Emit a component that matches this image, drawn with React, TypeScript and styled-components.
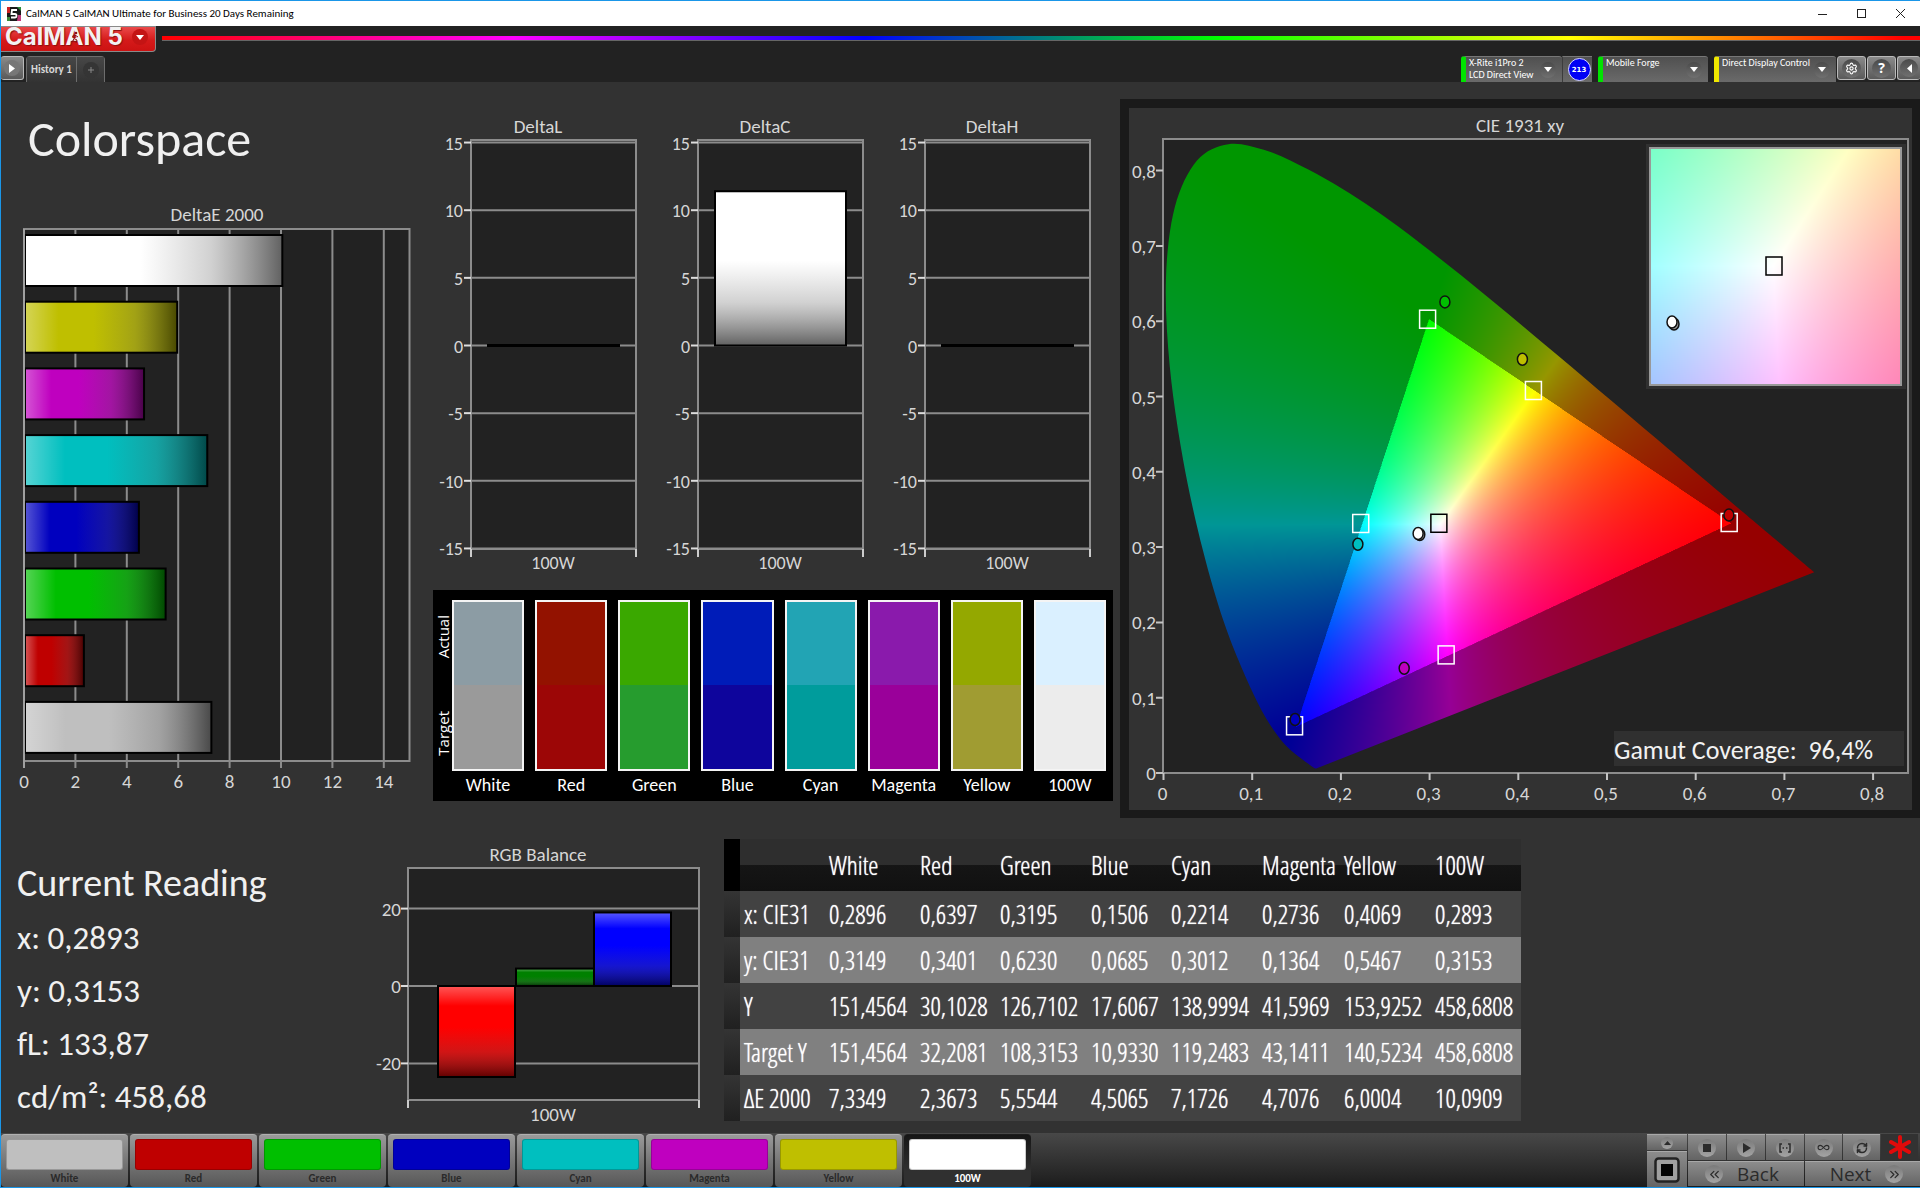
import React, { useLayoutEffect, useRef } from 'react';
import styled, { createGlobalStyle } from 'styled-components';
import { Settings, ChevronsLeft, ChevronsRight, Infinity as InfinityIcon, RefreshCw } from 'lucide-react';

const HUMANIST = 'Carlito, Calibri, Lato, sans-serif';
const CONDENSED = '"Open Sans Condensed Light", "Roboto Condensed", "Open Sans", sans-serif';
const PLAIN = '"Open Sans", "Noto Sans", sans-serif';
const TEXT = '#d6d6d6';
const PLOT = '#222222';
const LINE = '#8c8c8c';

const GlobalStyle = createGlobalStyle`
  *, *::before, *::after { box-sizing: border-box; }
  body { margin: 0; background: #323232; }
  button { font: inherit; color: inherit; border: 0; padding: 0; background: none; cursor: pointer; }
  h1, h2, p, dl, dd, dt, ul { margin: 0; padding: 0; }
`;

/* ---------- window frame ---------- */

const Window = styled.div`
  display: flex;
  flex-direction: column;
  min-height: 100vh;
  border: solid #1a96e8;
  border-width: 1px 0 1px 1px;
  background: #323232;
  color: #efefef;
  font-family: ${HUMANIST};
`;

const TitleBar = styled.header`
  display: flex;
  align-items: center;
  gap: 5px;
  height: 25px;
  padding-left: 6px;
  background: #fff;
  color: #000;
  font: 11px/24px ${HUMANIST};
`;

const WindowButtons = styled.div`
  display: flex;
  margin-left: auto;
`;

const WindowButton = styled.button`
  display: grid;
  place-items: center;
  width: 39px;
  height: 24px;
`;

const Header = styled.div`
  display: grid;
  grid-template-rows: 26px 30px;
  background: #222;
`;

const BrandRow = styled.div`
  display: flex;
  align-items: flex-start;
  gap: 6px;
`;

const Brand = styled.button`
  display: flex;
  align-items: center;
  justify-content: space-between;
  width: 155px;
  height: 26px;
  padding: 0 7px 4px 4px;
  border: solid #8a8a8a;
  border-width: 1px 1px 1px 0;
  border-radius: 0 0 4px 0;
  background: linear-gradient(#ea4a4a, #d51a1a 55%, #cc1212);
  color: #f2f2f2;
  font: 700 24px/20px Inter, "Liberation Sans", sans-serif;
  text-shadow: 1px 1px 1px #8b1010;
`;

const BrandName = styled.span`
  position: relative;
`;

/* The runner that stands on the crossbar of the "A". */
const Runner = styled.svg`
  position: absolute;
  left: 64px;
  top: 4px;
`;

const Spectrum = styled.div`
  flex: 1;
  height: 5px;
  margin-top: 10px;
  background: linear-gradient(90deg, #f00, #f0f 20%, #00f 40%, #0f0 60%, #ff0 80%, #f00 99%);
  border-bottom: 1px solid #666;
`;

const Round = styled.span<{ $size?: number; $tone?: string }>`
  display: grid;
  place-items: center;
  flex: none;
  width: ${p => p.$size ?? 16}px;
  height: ${p => p.$size ?? 16}px;
  border-radius: 50%;
  background: ${p => p.$tone ?? 'linear-gradient(#4a4a4a, #707070)'};
`;

const ToolRow = styled.div`
  display: flex;
  justify-content: space-between;
  align-items: flex-start;
  padding-top: 4px;
`;

const Group = styled.div`
  display: flex;
  align-items: flex-start;
  gap: 1px;
`;

const Square = styled.button<{ $w?: number; $open?: 'left' | 'right' }>`
  display: grid;
  place-items: center;
  width: ${p => p.$w ?? 29}px;
  height: 24px;
  border: 1px solid #b9b9b9;
  border-${p => p.$open ?? 'top'}-width: ${p => (p.$open ? 0 : 1)}px;
  border-radius: 3px;
  background: linear-gradient(#8a8a8a, #5a5a5a);
  color: #fff;
  font: 700 14px/16px ${PLAIN};
`;

const Tab = styled.button<{ $w: number }>`
  width: ${p => p.$w}px;
  height: 26px;
  display: grid;
  place-items: center;
  border: solid #6d6d6d;
  border-width: 1px 1px 0 0;
  background: linear-gradient(#474747, #333);
  font: 700 11px/24px ${HUMANIST};
  color: #d8d8d8;
`;

const Tabs = styled.div`
  display: flex;
  margin-left: 1px;
  border-left: 1px solid #6d6d6d;
  border-radius: 4px 4px 0 0;
  overflow: hidden;
`;

const Device = styled.button<{ $w: number; $mark: string }>`
  display: flex;
  justify-content: space-between;
  width: ${p => p.$w}px;
  height: 26px;
  padding-right: 6px;
  border-left: 5px solid ${p => p.$mark};
  border-top: 1px solid #777;
  border-radius: 3px 3px 0 0;
  background: linear-gradient(#505050, #6a6a6a);
  color: #fff;
  text-align: left;
  font: 10px/12px ${HUMANIST};
  white-space: pre;
`;

const DeviceLabel = styled.span`
  padding-left: 3px;
`;

const DeviceDrop = styled.span`
  display: flex;
  align-items: center;
`;

const DeviceGroup = styled.div`
  display: flex;
  margin-right: 5px;
`;

const Counter = styled.span`
  display: grid;
  place-items: center;
  width: 30px;
  height: 26px;
  padding-left: 3px;
  border-left: 1px solid #3c3c3c;
  border-top: 1px solid #777;
  background: linear-gradient(#505050, #6a6a6a);
`;

const CounterDot = styled.span`
  display: grid;
  place-items: center;
  width: 23px;
  height: 23px;
  border: 1px solid #dcdcff;
  border-radius: 50%;
  background: #0000f5;
  color: #fff;
  font: 700 7px/8px "DejaVu Sans", sans-serif;
`;

/* ---------- main area ---------- */

const Main = styled.main`
  flex: 1;
  display: flex;
  flex-direction: column;
`;

const TopRow = styled.section`
  display: grid;
  grid-template-columns: 429fr 690fr 800fr;
  align-items: start;
  padding-top: 17px;
`;

const Heading = styled.h1`
  padding: 0 0 0 27px;
  height: 101px;
  font: 50px/80px ${HUMANIST};
  color: #f0f0f0;
`;

const Drawing = styled.svg<{ $size?: number }>`
  display: block;
  width: 100%;
  height: auto;
  font: ${p => p.$size ?? 19}px ${HUMANIST};
`;

const Middle = styled.div`
  padding: 11px 9px 0 0;
`;

const Deltas = styled.div`
  display: grid;
  grid-template-columns: repeat(3, 1fr);
`;

const Comparison = styled.div`
  display: flex;
  margin: 10px -2px 0 3px;
  padding: 10px 7px 2px 0;
  background: #000;
`;

const SideLabels = styled.div`
  display: flex;
  flex-direction: column;
  justify-content: space-between;
  align-items: center;
  width: 19px;
  height: 171px;
  padding: 15px 0;
`;

const SideLabel = styled.span`
  writing-mode: vertical-rl;
  transform: rotate(180deg);
  font: 15px/18px ${PLAIN};
  color: #fff;
`;

const Pairs = styled.div`
  flex: 1;
  display: grid;
  grid-template-columns: repeat(8, 1fr);
  column-gap: 11px;
`;

const Pair = styled.div`
  font: 18px/28px ${HUMANIST};
  color: #fff;
  text-align: center;
`;

const PairColors = styled.div<{ $actual: string; $target: string }>`
  height: 171px;
  border: 2px solid #f4f4f4;
  background: linear-gradient(${p => p.$actual} 50%, ${p => p.$target} 50%);
`;

const CiePanel = styled.div`
  border: 9px solid #1a1a1a;
  border-width: 9px 8px 8px 9px;
`;

const GamutCanvas = styled.canvas`
  display: block;
  width: 100%;
  height: 100%;
`;

const BottomRow = styled.section`
  display: grid;
  grid-template-columns: 359fr 364fr 797fr 399fr;
  align-items: start;
`;

const Reading = styled.div`
  padding: 39px 0 0 16px;
  color: #f0f0f0;
`;

const ReadingTitle = styled.h2`
  font: 38px/52px ${HUMANIST};
  margin-bottom: 3px;
`;

const ReadingLine = styled.p`
  font: 33px/53px ${HUMANIST};
`;

const Results = styled.table`
  width: 100%;
  margin-top: 21px;
  border-collapse: collapse;
  table-layout: fixed;
  font: 300 26px/45px ${CONDENSED};
  color: #fff;
  text-shadow: 0 0 1px #fff;
  text-align: left;

  th, td { padding: 1px 0 0 4px; font-weight: inherit; white-space: nowrap; }
`;

const HeadRow = styled.tr`
  height: 52px;
  background: linear-gradient(#2e2e2e 49%, #151515 51%, #111);
`;

const DataRow = styled.tr<{ $light: boolean }>`
  height: 46px;
  background: ${p => (p.$light ? '#808080' : '#424242')};
`;

const Gutter = styled.td<{ $head?: boolean }>`
  background: ${p => (p.$head ? '#000' : 'linear-gradient(#343434, #202020)')};
`;

/* ---------- footer ---------- */

const Footer = styled.footer`
  display: flex;
  justify-content: space-between;
  height: 54px;
  padding-top: 1px;
  background: linear-gradient(#484848, #1c1c1c);
`;

const Patches = styled.div`
  display: flex;
  gap: 2px;
`;

const Patch = styled.button<{ $on: boolean }>`
  display: flex;
  flex-direction: column;
  width: 127px;
  padding: 4px 5px 0;
  border-top: 1px solid ${p => (p.$on ? '#1c1c1c' : '#b0b0b0')};
  border-radius: 4px;
  background: ${p => (p.$on ? 'linear-gradient(#161616, #303030 70%)' : 'linear-gradient(#9a9a9a, #777 50%, #575757)')};
  color: ${p => (p.$on ? '#fff' : '#2a2a2a')};
  font: 700 11px/17px ${HUMANIST};
  text-align: center;
`;

const PatchColor = styled.span<{ $color: string }>`
  display: block;
  width: 100%;
  height: 31px;
  border-radius: 3px;
  border: 1px solid rgba(0, 0, 0, 0.2);
  background: ${p => p.$color};
`;

const PatchName = styled.span`
  width: 100%;
`;

const Controls = styled.div`
  display: flex;
  gap: 1px;
  color: #2b2b2b;
`;

const Stack = styled.div`
  display: flex;
  flex-direction: column;
  gap: 1px;
`;

const Buttons = styled.div`
  display: flex;
  gap: 1px;
`;

const Control = styled.button<{ $w: number; $h: number; $pad?: string }>`
  display: flex;
  align-items: center;
  justify-content: center;
  gap: 14px;
  width: ${p => p.$w}px;
  height: ${p => p.$h}px;
  padding: ${p => p.$pad ?? '0'};
  border-top: 1px solid #a8a8a8;
  background: linear-gradient(#8c8c8c, #646464);
  font: 500 19px/22px ${PLAIN};
`;

const Busy = styled.span`
  display: grid;
  place-items: center;
  width: 37px;
  background: #323232;
`;

/* ---------- chart helpers ---------- */

const DownArrow = () => <svg width="8" height="5" viewBox="0 0 8 5"><path d="M0 0h8L4 5z" fill="#fff" /></svg>;

const Shade = ({ id, vertical }: { id: string; vertical?: boolean }) => (
  <linearGradient id={id} x1="0" y1="0" x2={vertical ? 0 : 1} y2={vertical ? 1 : 0}>
    <stop offset="0" stopColor="#fff" stopOpacity="0.34" />
    <stop offset="0.22" stopColor="#fff" stopOpacity="0" />
    <stop offset="0.45" stopColor="#606060" stopOpacity="0" />
    <stop offset="0.72" stopColor="#505050" stopOpacity="0.26" />
    <stop offset="1" stopColor="#000" stopOpacity="0.62" />
  </linearGradient>
);

interface BarProps { x: number; y: number; w: number; h: number; color: string; shade: string }
const Bar = ({ x, y, w, h, color, shade }: BarProps) => (
  <g>
    <rect x={x} y={y} width={w} height={h} fill={color} />
    <rect x={x} y={y} width={w} height={h} fill={`url(#${shade})`} stroke="#000" strokeWidth="2" />
  </g>
);

const deltaE = [
  { value: 10.09, color: '#ffffff' },
  { value: 6.0, color: '#bfbf00' },
  { value: 4.71, color: '#bf00bf' },
  { value: 7.17, color: '#00bfbf' },
  { value: 4.51, color: '#0000bf' },
  { value: 5.55, color: '#00bf00' },
  { value: 2.37, color: '#bf0000' },
  { value: 7.33, color: '#bfbfbf' },
];

const DeltaEChart = () => {
  const x = (v: number) => 23 + v * 25.7;
  return (
    <Drawing viewBox="0 0 429 600" role="img" aria-label="DeltaE 2000">
      <defs><Shade id="across" /></defs>
      <text x="216" y="21" fill={TEXT} textAnchor="middle">DeltaE 2000</text>
      <rect x={x(0)} y="29" width={x(15) - x(0)} height="532" fill={PLOT} stroke={LINE} strokeWidth="2" />
      {[0, 2, 4, 6, 8, 10, 12, 14].map(v => (
        <g key={v}>
          <path d={`M${x(v)} 29V568`} stroke={LINE} strokeWidth="2" />
          <text x={x(v)} y="588" fill={TEXT} textAnchor="middle">{v}</text>
        </g>
      ))}
      {deltaE.map((d, i) => (
        <Bar key={d.color} x={x(0) + 1} y={35 + i * 66.7} w={x(d.value) - x(0) - 2} h={51} color={d.color} shade="across" />
      ))}
      <path d={`M${x(0)} 29V568`} stroke="#a0a0a0" strokeWidth="2" />
    </Drawing>
  );
};

const DeltaChart = ({ name, value }: { name: string; value: number }) => {
  const y = (v: number) => 235.5 - v * 13.53;
  return (
    <Drawing $size={18} viewBox="0 0 227 470" role="img" aria-label={name}>
      <defs><Shade id={`down-${name}`} vertical /></defs>
      <text x="108" y="23" fill={TEXT} textAnchor="middle" fontSize="19">{name}</text>
      <rect x="41" y="30" width="165" height="409" fill={PLOT} stroke={LINE} strokeWidth="2" />
      {[15, 10, 5, 0, -5, -10, -15].map(v => (
        <g key={v}>
          <path d={`M41 ${y(v)}H206`} stroke={LINE} strokeWidth="2" />
          <path d={`M34 ${y(v)}H41`} stroke="#ddd" strokeWidth="2" />
          <text x="33" y={y(v) + 7} fill={TEXT} textAnchor="end">{v}</text>
        </g>
      ))}
      <path d="M41 439V447M206 439V447" stroke="#ccc" strokeWidth="2" />
      {value > 0
        ? <Bar x={58} y={y(value)} w={131} h={y(0) - y(value)} color="#fff" shade={`down-${name}`} />
        : <path d={`M57 ${y(0)}H190`} stroke="#000" strokeWidth="3" />}
      <text x="123" y="459" fill={TEXT} textAnchor="middle">100W</text>
    </Drawing>
  );
};

const BalanceChart = () => {
  const y = (v: number) => 168 - v * 3.87;
  return (
    <Drawing viewBox="0 0 364 315" role="img" aria-label="RGB Balance">
      <defs><Shade id="balance" vertical /></defs>
      <text x="178" y="43" fill={TEXT} textAnchor="middle">RGB Balance</text>
      <rect x="48" y="50" width="291" height="232" fill={PLOT} stroke={LINE} strokeWidth="2" />
      {[20, 0, -20].map(v => (
        <g key={v}>
          <path d={`M48 ${y(v)}H339`} stroke={LINE} strokeWidth="2" />
          <path d={`M41 ${y(v)}H48`} stroke="#ddd" strokeWidth="2" />
          <text x="41" y={y(v) + 7} fill={TEXT} textAnchor="end">{v}</text>
        </g>
      ))}
      <path d="M48 282V290M339 282V290" stroke="#ccc" strokeWidth="2" />
      <Bar x={78} y={y(0)} w={77} h={91} color="#ff0000" shade="balance" />
      <Bar x={156} y={y(4.5)} w={78} h={y(0) - y(4.5)} color="#008000" shade="balance" />
      <Bar x={234} y={y(19)} w={77} h={y(0) - y(19)} color="#0000ff" shade="balance" />
      <text x="193" y="303" fill={TEXT} textAnchor="middle">100W</text>
    </Drawing>
  );
};

/* ---------- chromaticity diagram ---------- */

const locus: [number, number][] = [
  [0.1733, 0.0048], [0.1714, 0.0051], [0.1689, 0.0069],
  [0.1644, 0.0109], [0.1566, 0.0177], [0.144, 0.0297], [0.1355, 0.0399], [0.1241, 0.0578], [0.1096, 0.0868],
  [0.0913, 0.1327], [0.0687, 0.2007], [0.0454, 0.295], [0.0235, 0.4127], [0.0082, 0.5384], [0.0039, 0.6548],
  [0.0139, 0.7502], [0.0389, 0.812], [0.0743, 0.8338], [0.1142, 0.8262], [0.1547, 0.8059], [0.1929, 0.7816],
  [0.2296, 0.7543], [0.2658, 0.7243], [0.3016, 0.6923], [0.3373, 0.6589], [0.3731, 0.6245], [0.4087, 0.5896],
  [0.4441, 0.5547], [0.4788, 0.5202], [0.5125, 0.4866], [0.5448, 0.4544], [0.5752, 0.4242], [0.6029, 0.3965],
  [0.627, 0.3725], [0.6482, 0.3514], [0.6658, 0.334], [0.6915, 0.3083], [0.714, 0.2859], [0.73, 0.27], [0.7347, 0.2653],
];

/* Smooth curve through the given points (Catmull-Rom turned into cubic Béziers). */
function smoothPath(points: [number, number][]): string {
  const at = (i: number) => points[Math.min(Math.max(i, 0), points.length - 1)];
  const parts = [`M${at(0)[0]} ${at(0)[1]}`];
  for (let i = 0; i < points.length - 1; i++) {
    const [a, b, c, d] = [at(i - 1), at(i), at(i + 1), at(i + 2)];
    parts.push(`C${b[0] + (c[0] - a[0]) / 6} ${b[1] + (c[1] - a[1]) / 6} ${c[0] - (d[0] - b[0]) / 6} ${c[1] - (d[1] - b[1]) / 6} ${c[0]} ${c[1]}`);
  }
  return `${parts.join('')}Z`;
}

function chromaticity(x: number, y: number): [number, number, number] {
  const yy = Math.max(y, 0.0001);
  const X = x / yy;
  const Z = (1 - x - yy) / yy;
  const raw = [
    3.2406 * X - 1.5372 - 0.4986 * Z,
    -0.9689 * X + 1.8758 + 0.0415 * Z,
    0.0557 * X - 0.204 + 1.057 * Z,
  ];
  const level = Math.min(...raw) < -0.002 ? 150 : 255;
  const top = Math.max(...raw);
  return raw.map(c => (Math.max(c, 0) / top) * level) as [number, number, number];
}

interface FieldProps { x0: number; x1: number; y0: number; y1: number; w: number; h: number }
const Field = ({ x0, x1, y0, y1, w, h }: FieldProps) => {
  const ref = useRef<HTMLCanvasElement>(null);
  useLayoutEffect(() => {
    const ctx = ref.current?.getContext('2d');
    if (!ctx) return;
    const image = ctx.createImageData(w, h);
    for (let j = 0; j < h; j++) {
      for (let i = 0; i < w; i++) {
        const [r, g, b] = chromaticity(x0 + ((i + 0.5) / w) * (x1 - x0), y1 - ((j + 0.5) / h) * (y1 - y0));
        image.data.set([r, g, b, 255], (j * w + i) * 4);
      }
    }
    ctx.putImageData(image, 0, 0);
  }, [x0, x1, y0, y1, w, h]);
  return <GamutCanvas ref={ref} width={w} height={h} />;
};

const targets: [number, number, string][] = [
  [0.3, 0.6, '#fff'], [0.4193, 0.5053, '#fff'], [0.64, 0.33, '#fff'], [0.2246, 0.3287, '#fff'],
  [0.3209, 0.1542, '#fff'], [0.15, 0.06, '#fff'], [0.3127, 0.329, '#000'],
];
const measured: [number, number, string][] = [
  [0.3195, 0.623, '#00bf00'], [0.4069, 0.5467, '#bfbf00'], [0.6397, 0.3401, '#bf0000'], [0.2214, 0.3012, '#00bfbf'],
  [0.2736, 0.1364, '#bf00bf'], [0.1506, 0.0685, '#0000bf'], [0.2912, 0.314, '#9a9a9a'], [0.2893, 0.3153, '#ffffff'],
];

const Target = ({ x, y, color }: { x: number; y: number; color: string }) => (
  <rect x={x - 8} y={y - 9} width="16" height="18" fill="none" stroke={color} strokeWidth="1.5" />
);
const Dot = ({ x, y, color }: { x: number; y: number; color: string }) => (
  <ellipse cx={x} cy={y} rx="5" ry="6" fill={color} stroke="#111" strokeWidth="1.5" />
);

const CieChart = () => {
  const x = (v: number) => 33.5 + v * 887;
  const y = (v: number) => 664 - v * 753;
  return (
    <Drawing viewBox="0 0 783 702" role="img" aria-label="CIE 1931 xy">
      <defs>
        <clipPath id="locus"><path d={smoothPath(locus.map(([a, b]) => [x(a), y(b)]))} /></clipPath>
      </defs>
      <text x="391" y="24" fill={TEXT} textAnchor="middle">CIE 1931 xy</text>
      <rect x="34" y="31" width="745" height="634" fill={PLOT} stroke={LINE} strokeWidth="2" />
      {[0, 0.1, 0.2, 0.3, 0.4, 0.5, 0.6, 0.7, 0.8].map(v => (
        <g key={v}>
          <path d={`M27 ${y(v) + 1}H34M${x(v) + 1} 665V672`} stroke="#c4c4c4" strokeWidth="2" />
          <text x="27" y={y(v) + 8} fill={TEXT} textAnchor="end">{String(v).replace('.', ',')}</text>
          <text x={x(v)} y="692" fill={TEXT} textAnchor="middle">{String(v).replace('.', ',')}</text>
        </g>
      ))}
      <g clipPath="url(#locus)">
        <foreignObject x={x(0)} y={y(0.84)} width={x(0.84) - x(0)} height={y(0) - y(0.84)}>
          <Field x0={0} x1={0.84} y0={0} y1={0.84} w={1490} h={1265} />
        </foreignObject>
      </g>
      {targets.map(([a, b, c]) => <Target key={a} x={x(a) - 1} y={y(b) - 1} color={c} />)}
      {measured.map(([a, b, c]) => <Dot key={a} x={x(a) - 1} y={y(b) - 1} color={c} />)}

      <rect x="517" y="36" width="260" height="245" fill="#303030" />
      <foreignObject x="521" y="40" width="251" height="237">
        <Field x0={0.2848} x1={0.3416} y0={0.3} y1={0.3577} w={251} h={237} />
      </foreignObject>
      <rect x="521" y="40" width="251" height="237" fill="none" stroke="#999" strokeWidth="2" />
      <Target x={645} y={158} color="#000" />
      <Dot x={545} y={216} color="#999" />
      <Dot x={543} y={214} color="#fff" />

      <rect x="485" y="623" width="290" height="35" fill="#303030" />
      <text x="485" y="651" fill="#f2f2f2" fontSize="26">{'Gamut Coverage:\u00a0 96,4%'}</text>
    </Drawing>
  );
};

/* ---------- data ---------- */

const pairs = [
  ['White', '#8c9ca4', '#9a9a9a'], ['Red', '#931200', '#9c0606'], ['Green', '#3aa800', '#269c2e'],
  ['Blue', '#001cb8', '#0e059c'], ['Cyan', '#22a4b4', '#009c9c'], ['Magenta', '#8a1aac', '#9a009a'],
  ['Yellow', '#94a800', '#a09c32'], ['100W', '#daf0ff', '#ececec'],
];

const columns = ['White', 'Red', 'Green', 'Blue', 'Cyan', 'Magenta', 'Yellow', '100W'];
const columnWidths = [16, 85, 91, 80, 91, 80, 91, 82, 91, 90];
const rows: [string, string[]][] = [
  ['x: CIE31', ['0,2896', '0,6397', '0,3195', '0,1506', '0,2214', '0,2736', '0,4069', '0,2893']],
  ['y: CIE31', ['0,3149', '0,3401', '0,6230', '0,0685', '0,3012', '0,1364', '0,5467', '0,3153']],
  ['Y', ['151,4564', '30,1028', '126,7102', '17,6067', '138,9994', '41,5969', '153,9252', '458,6808']],
  ['Target Y', ['151,4564', '32,2081', '108,3153', '10,9330', '119,2483', '43,1411', '140,5234', '458,6808']],
  ['ΔE 2000', ['7,3349', '2,3673', '5,5544', '4,5065', '7,1726', '4,7076', '6,0004', '10,0909']],
];

const patches = [
  ['White', '#bfbfbf'], ['Red', '#bf0000'], ['Green', '#00bf00'], ['Blue', '#0000bf'],
  ['Cyan', '#00bfbf'], ['Magenta', '#bf00bf'], ['Yellow', '#bfbf00'], ['100W', '#ffffff'],
];

const KNOB = 'linear-gradient(#7a7a7a, #a4a4a4)';

export default function App() {
  return (
    <Window>
      <GlobalStyle />
      <TitleBar>
        <svg width="14" height="14" viewBox="0 0 14 14" aria-hidden="true">
          <rect width="14" height="14" fill="#1a1a1a" />
          <path d="M0 0h3v6H0z" fill="#c22" /><path d="M10 0h4v4z" fill="#2a8a3a" /><path d="M11 8h3v6h-4z" fill="#c33a7a" /><path d="M0 10h3v4H0z" fill="#3a8a3a" />
          <path d="M10 3H5L4.500 7H8Q9.500 7 9.500 8.700T8 10.500H4" fill="none" stroke="#fff" strokeWidth="1.800" />
        </svg>
        <span>CalMAN 5 CalMAN Ultimate for Business 20 Days Remaining</span>
        <WindowButtons>
          <WindowButton aria-label="Minimize"><svg width="9" height="9"><path d="M0 5.500h9" stroke="#222" /></svg></WindowButton>
          <WindowButton aria-label="Maximize"><svg width="9" height="9"><rect x="0.500" y="0.500" width="8" height="8" fill="none" stroke="#222" /></svg></WindowButton>
          <WindowButton aria-label="Close"><svg width="9" height="9"><path d="M0 0l9 9M9 0L0 9" stroke="#222" /></svg></WindowButton>
        </WindowButtons>
      </TitleBar>

      <Header>
        <BrandRow>
          <Brand>
            <BrandName>
              CalMAN 5
              <Runner width="12" height="13" viewBox="0 0 12 13" aria-hidden="true">
                <circle cx="7" cy="2" r="1.300" fill="#8b1010" />
                <path d="M6.500 4L5 7.500L8 9L7 12M5 7.500L4 10L1.500 11M3 5.500L6 4L9 6" fill="none" stroke="#8b1010" strokeWidth="1" />
              </Runner>
            </BrandName>
            <Round $tone="#c41414"><DownArrow /></Round>
          </Brand>
          <Spectrum />
        </BrandRow>
        <ToolRow>
          <Group>
            <Square $w={23} $open="left" aria-label="Show panel">
              <Round $tone="#777"><svg width="6" height="9"><path d="M0 0l6 4.500L0 9z" fill="#fff" /></svg></Round>
            </Square>
            <Tabs>
              <Tab $w={50}>History 1</Tab>
              <Tab $w={28} aria-label="Add tab">
                <Round $tone="#353535"><svg width="6" height="6"><path d="M3 0v6M0 3h6" stroke="#888" /></svg></Round>
              </Tab>
            </Tabs>
          </Group>
          <Group>
            <DeviceGroup>
              <Device $w={101} $mark="#00e400">
                <DeviceLabel>{'X-Rite i1Pro 2\nLCD Direct View'}</DeviceLabel>
                <DeviceDrop><Round><DownArrow /></Round></DeviceDrop>
              </Device>
              <Counter><CounterDot>213</CounterDot></Counter>
            </DeviceGroup>
            <DeviceGroup>
              <Device $w={110} $mark="#00e400">
                <DeviceLabel>Mobile Forge</DeviceLabel>
                <DeviceDrop><Round><DownArrow /></Round></DeviceDrop>
              </Device>
            </DeviceGroup>
            <Device $w={122} $mark="#f0e800">
              <DeviceLabel>Direct Display Control</DeviceLabel>
              <DeviceDrop><Round><DownArrow /></Round></DeviceDrop>
            </Device>
            <Square aria-label="Settings"><Round $size={19}><Settings size={13} /></Round></Square>
            <Square aria-label="Help"><Round $size={19}>?</Round></Square>
            <Square $w={23} $open="right" aria-label="Hide panel">
              <Round $size={18}><svg width="5" height="9"><path d="M5 0L0 4.500L5 9z" fill="#fff" /></svg></Round>
            </Square>
          </Group>
        </ToolRow>
      </Header>

      <Main>
        <TopRow>
          <div>
            <Heading>Colorspace</Heading>
            <DeltaEChart />
          </div>
          <Middle>
            <Deltas>
              <DeltaChart name="DeltaL" value={0} />
              <DeltaChart name="DeltaC" value={11.4} />
              <DeltaChart name="DeltaH" value={0} />
            </Deltas>
            <Comparison>
              <SideLabels>
                <SideLabel>Actual</SideLabel>
                <SideLabel>Target</SideLabel>
              </SideLabels>
              <Pairs>
                {pairs.map(([name, actual, target]) => (
                  <Pair key={name}>
                    <PairColors $actual={actual} $target={target} />
                    {name}
                  </Pair>
                ))}
              </Pairs>
            </Comparison>
          </Middle>
          <CiePanel><CieChart /></CiePanel>
        </TopRow>

        <BottomRow>
          <Reading>
            <ReadingTitle>Current Reading</ReadingTitle>
            <ReadingLine>x: 0,2893</ReadingLine>
            <ReadingLine>y: 0,3153</ReadingLine>
            <ReadingLine>fL: 133,87</ReadingLine>
            <ReadingLine>cd/m²: 458,68</ReadingLine>
          </Reading>
          <BalanceChart />
          <Results>
            <colgroup>{columnWidths.map((w, i) => <col key={i} width={w} />)}</colgroup>
            <thead>
              <HeadRow>
                <Gutter $head /><td />
                {columns.map(c => <th key={c} scope="col">{c}</th>)}
              </HeadRow>
            </thead>
            <tbody>
              {rows.map(([name, values], r) => (
                <DataRow key={name} $light={r % 2 === 1}>
                  <Gutter />
                  <th scope="row">{name}</th>
                  {values.map((v, i) => <td key={i}>{v}</td>)}
                </DataRow>
              ))}
            </tbody>
          </Results>
        </BottomRow>
      </Main>

      <Footer>
        <Patches>
          {patches.map(([name, color]) => (
            <Patch key={name} $on={name === '100W'}>
              <PatchColor $color={color} />
              <PatchName>{name}</PatchName>
            </Patch>
          ))}
        </Patches>
        <Controls>
          <Stack>
            <Control $w={40} $h={16} aria-label="Expand">
              <Round $size={12} $tone={KNOB}><svg width="7" height="4"><path d="M0 4h7L3.500 0z" fill="#2b2b2b" /></svg></Round>
            </Control>
            <Control $w={40} $h={36} aria-label="Stop">
              <svg width="26" height="26"><rect x="1.500" y="1.500" width="23" height="23" rx="3" fill="#a0a0a0" stroke="#222" strokeWidth="2.500" /><rect x="7" y="7" width="12" height="12" fill="#050505" /></svg>
            </Control>
          </Stack>
          <Stack>
            <Buttons>
              <Control $w={38} $h={26} aria-label="Stop reading"><Round $size={18} $tone={KNOB}><svg width="8" height="8"><rect width="8" height="8" fill="#2b2b2b" /></svg></Round></Control>
              <Control $w={38} $h={26} aria-label="Read"><Round $size={18} $tone={KNOB}><svg width="9" height="10"><path d="M1 0l8 5l-8 5z" fill="#2b2b2b" /></svg></Round></Control>
              <Control $w={38} $h={26} aria-label="Read series">
                <Round $size={18} $tone={KNOB}><svg width="12" height="10"><path d="M3 1H1v8h2M9 1h2v8H9" fill="none" stroke="#2b2b2b" strokeWidth="1.500" /><path d="M3.500 5h1.500M7 5h1.500" stroke="#2b2b2b" strokeWidth="1.500" /></svg></Round>
              </Control>
              <Control $w={37} $h={26} aria-label="Continuous"><Round $size={18} $tone={KNOB}><InfinityIcon size={13} /></Round></Control>
              <Control $w={37} $h={26} aria-label="Refresh"><Round $size={18} $tone={KNOB}><RefreshCw size={12} strokeWidth={3} /></Round></Control>
              <Busy>
                <svg width="22" height="24" viewBox="-11 -12 22 24" aria-label="Busy"><path d="M0-10V10M-9-5L9 5M-9 5L9-5" stroke="#e00a0a" strokeWidth="4" strokeLinecap="round" /></svg>
              </Busy>
            </Buttons>
            <Buttons>
              <Control $w={116} $h={25} $pad="0 8px 0 0"><Round $size={18} $tone={KNOB}><ChevronsLeft size={15} /></Round>Back</Control>
              <Control $w={115} $h={25} $pad="0 0 0 8px">Next<Round $size={18} $tone={KNOB}><ChevronsRight size={15} /></Round></Control>
            </Buttons>
          </Stack>
        </Controls>
      </Footer>
    </Window>
  );
}
